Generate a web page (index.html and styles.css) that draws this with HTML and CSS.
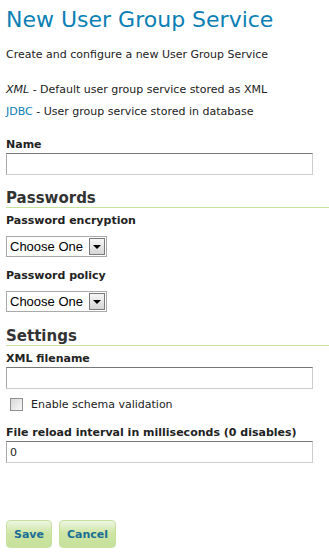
FILE: index.html
```html
<!DOCTYPE html>
<html lang="en">
<head>
    <meta charset="UTF-8">
    <title>New User Group Service</title>
    <link rel="stylesheet" href="styles.css">
</head>
<body>
    <div class="page">
        <h1 class="title">New User Group Service</h1>
        <p class="intro">Create and configure a new User Group Service</p>
        <ul class="types">
            <li><em>XML</em> - Default user group service stored as XML</li>
            <li><a href="#">JDBC</a> - User group service stored in database</li>
        </ul>
        <form action="#" class="form">
            <div class="field">
                <label for="name">Name</label>
                <input type="text" id="name" class="text">
            </div>

            <h3 class="section">Passwords</h3>
            <div class="field">
                <label for="encryption">Password encryption</label>
                <div class="choice">
                    <select id="encryption"><option>Choose One</option></select>
                    <span class="arrow"></span>
                </div>
            </div>
            <div class="field">
                <label for="policy">Password policy</label>
                <div class="choice">
                    <select id="policy"><option>Choose One</option></select>
                    <span class="arrow"></span>
                </div>
            </div>

            <h3 class="section">Settings</h3>
            <div class="field">
                <label for="fileName">XML filename</label>
                <input type="text" id="fileName" class="text">
            </div>
            <div class="check">
                <input type="checkbox" id="validate">
                <label for="validate">Enable schema validation</label>
            </div>
            <div class="field">
                <label for="interval">File reload interval in milliseconds (0 disables)</label>
                <input type="text" id="interval" class="text" value="0">
            </div>

            <div class="buttons">
                <button type="submit" class="btn">Save</button>
                <button type="button" class="btn">Cancel</button>
            </div>
        </form>
    </div>
</body>
</html>
```

FILE: styles.css
```css
*{
    margin: 0;
    padding: 0;
    box-sizing: border-box;
}
:root{
    --blue: #0b7fb5;
    --text: #222;
    --heading: #333;
    --green-line: #c7e29c;
    --font: "DejaVu Sans", Verdana, sans-serif;
}
body{
    background: white;
    font-family: var(--font);
    font-size: 11px;
    color: var(--text);
}
.page{
    padding: 6px 0 0 6px;
}
.title{
    font-size: 22px;
    font-weight: normal;
    color: var(--blue);
    line-height: 28px;
    margin-bottom: 13px;
}
.intro{
    line-height: 16px;
    margin-bottom: 19px;
}
.types{
    list-style: none;
    line-height: 16px;
}
.types li + li{
    margin-top: 6px;
}
.types a{
    color: var(--blue);
    text-decoration: none;
}
.form{
    margin-top: 18px;
}
.field{
    display: flex;
    flex-direction: column;
    align-items: flex-start;
    margin-bottom: 9px;
}
.field label{
    font-weight: bold;
    line-height: 14px;
    margin-bottom: 1px;
    color: var(--text);
}
.text{
    width: 307px;
    height: 22px;
    border: 1px solid #ccc;
    border-top-color: #777;
    border-left-color: #aaa;
    font-family: var(--font);
    font-size: 11px;
    padding: 0 3px;
    color: var(--text);
}
.choice{
    display: flex;
    align-items: center;
    width: 101px;
    height: 21px;
    margin: 7px 0 3px 0;
    border: 1px solid #aaa;
    background: white;
}
.choice select{
    appearance: none;
    -webkit-appearance: none;
    border: none;
    outline: none;
    background: transparent;
    font-family: "Liberation Sans", Arial, sans-serif;
    font-size: 13px;
    color: black;
    width: 83px;
    padding-left: 3px;
}
.arrow{
    display: flex;
    align-items: center;
    justify-content: center;
    width: 16px;
    height: 17px;
    margin-left: auto;
    margin-right: 1px;
    border: 1px solid #7a7a7a;
    background: linear-gradient(#f6f6f6, #d6d6d6);
}
.arrow::after{
    content: "";
    border-left: 4px solid transparent;
    border-right: 4px solid transparent;
    border-top: 4px solid black;
    margin-top: 1px;
}
.section{
    font-size: 15px;
    color: var(--heading);
    line-height: 18px;
    border-bottom: 1px solid var(--green-line);
    margin: 14px 0 6px 0;
}
.section ~ .section{
    margin-top: 12px;
}
.check{
    display: flex;
    align-items: center;
    gap: 8px;
    height: 13px;
    margin: 0 0 15px 4px;
}
.check input{
    appearance: none;
    -webkit-appearance: none;
    width: 13px;
    height: 13px;
    border: 1px solid #8f8f8f;
    background: linear-gradient(135deg, #d8d8d8, #f8f8f8);
}
.check label{
    line-height: 14px;
}
.buttons{
    display: flex;
    gap: 7px;
    margin-top: 57px;
}
.btn{
    font-family: var(--font);
    font-size: 11px;
    font-weight: bold;
    color: #1a6e96;
    height: 28px;
    padding: 0 7px;
    border: 1px solid #c7e0a0;
    border-radius: 4px;
    background: linear-gradient(#eef6e2, #cfe6a6 45%, #c5e19a);
}
```
